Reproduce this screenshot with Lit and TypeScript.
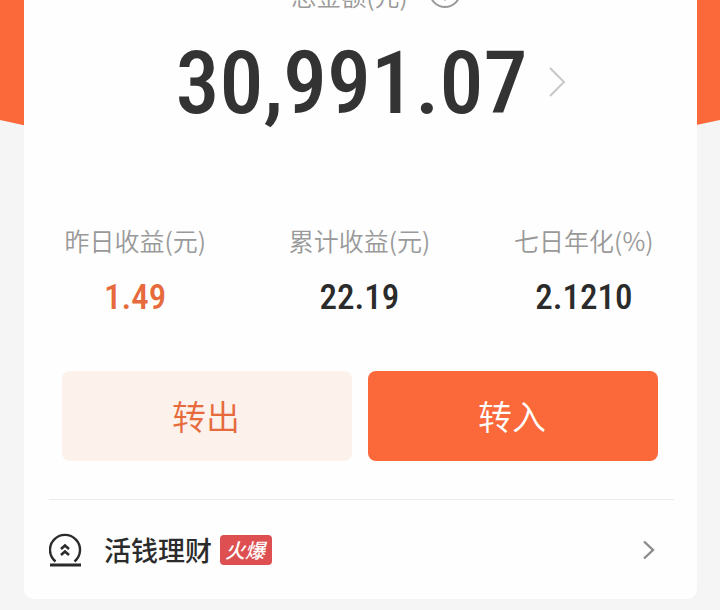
import { LitElement, html, css } from "lit";
import { customElement } from "lit/decorators.js";

interface Stat {
  label: string;
  value: string;
  accent?: boolean;
}

const stats: Stat[] = [
  { label: "昨日收益(元)", value: "1.49", accent: true },
  { label: "累计收益(元)", value: "22.19" },
  { label: "七日年化(%)", value: "2.1210" },
];

@customElement("app-root")
export class AppRoot extends LitElement {
  static styles = css`
    :host {
      display: block;
      min-height: 100vh;
      background: #f5f5f5;
      font-family: "Noto Sans CJK SC", sans-serif;
      color: #333;
    }
    * {
      box-sizing: border-box;
    }
    .page {
      position: relative;
      padding: 0 23px 11px 24px;
      overflow: hidden;
    }
    .banner {
      position: absolute;
      inset: 0 0 auto 0;
      width: 100%;
      height: 160px;
      display: block;
    }
    .card {
      position: relative;
      background: #fefefe;
      border-radius: 0 0 10px 10px;
      padding: 0 23px 0 25px;
    }
    .total-label {
      display: flex;
      justify-content: center;
      gap: 20px;
      height: 11px;
      align-items: flex-end;
      color: #999;
      font-size: 25px;
      line-height: 32px;
      font-weight: 350;
      padding-left: 30px;
    }
    .total-label svg {
      display: block;
      margin-bottom: 2px;
    }
    .total {
      display: flex;
      justify-content: center;
      align-items: center;
      gap: 20px;
      padding-left: 18px;
      color: #333;
      text-decoration: none;
      font: 500 88px/104px "Roboto Condensed", Roboto, sans-serif;
      height: 144px;
    }
    .stats {
      display: grid;
      grid-template-columns: repeat(3, 1fr);
      margin: 0 -22px 0 -26px;
      padding-top: 67px;
    }
    .stat {
      display: flex;
      flex-direction: column;
      align-items: center;
      gap: 16px;
    }
    dt {
      color: #999;
      font-size: 25px;
      line-height: 36px;
      font-weight: 350;
      white-space: nowrap;
    }
    dd {
      margin: 0;
      font: 500 35px/48px "Roboto Condensed", Roboto, sans-serif;
      color: #2b2b2b;
    }
    .accent {
      color: #e66a3c;
    }
    .actions {
      display: grid;
      grid-template-columns: 1fr 1fr;
      gap: 16px;
      padding: 49px 16px 0 13px;
    }
    .btn {
      height: 90px;
      margin: 0;
      padding: 0 2px 0 0;
      border: 0;
      border-radius: 8px;
      font: 350 34px/48px "Noto Sans CJK SC", sans-serif;
    }
    .out {
      background: #fcf1eb;
      color: #e66a3c;
    }
    .in {
      background: #fb693b;
      color: #fff;
    }
    .row {
      display: flex;
      align-items: center;
      margin-top: 38px;
      height: 100px;
      border-top: 1px solid #ececec;
      padding-right: 18px;
      color: #2b2b2b;
      text-decoration: none;
      font-size: 27px;
      line-height: 40px;
      font-weight: 500;
    }
    .name {
      margin-left: 21px;
    }
    .badge {
      margin-left: 8px;
      padding: 0 7px 0 5px;
      border-radius: 4px;
      background: #dd4f50;
      color: #fff;
      font-size: 20px;
      line-height: 30px;
      font-weight: 500;
      font-style: italic;
    }
    .row .arrow {
      margin-left: auto;
    }
    svg {
      flex: none;
    }
  `;

  render() {
    return html`
      <main class="page">
        <svg class="banner" viewBox="0 0 720 160" preserveAspectRatio="none" aria-hidden="true">
          <path d="M0 0H720V120Q360 202 0 120Z" fill="#fb693b" />
        </svg>
        <section class="card">
          <div class="total-label">
            <span>总金额(元)</span>
            <svg width="34" height="34" viewBox="0 0 34 34" fill="none" stroke="#999" stroke-width="2" aria-hidden="true">
              <circle cx="17" cy="17" r="15" />
              <path d="M12 13a5 5 0 1 1 7 4.500q-2 1 -2 3.500M17 23v2.500" />
            </svg>
          </div>
          <a class="total" href="#total">
            <span>30,991.07</span>
            <svg width="18" height="32" viewBox="0 0 18 32" fill="none" stroke="#c8c8c8" stroke-width="2" aria-hidden="true">
              <path d="M2 1L16 15L2 29" />
            </svg>
          </a>
          <dl class="stats">
            ${stats.map(
              (s) => html`<div class="stat">
                <dt>${s.label}</dt>
                <dd class=${s.accent ? "accent" : ""}>${s.value}</dd>
              </div>`
            )}
          </dl>
          <div class="actions">
            <button class="btn out" type="button">转出</button>
            <button class="btn in" type="button">转入</button>
          </div>
          <a class="row" href="#wealth">
            <svg width="34" height="36" viewBox="0 0 34 36" fill="none" stroke="#2b2b2b" aria-hidden="true">
              <path d="M6.500 29.500A15 15 0 1 1 25.500 29.500" stroke-width="2.400" />
              <path d="M1 33H32" stroke-width="3" />
              <path d="M12 17L16 13.500L20 17M12 23L16 19.500L20 23" stroke-width="2.600" />
            </svg>
            <span class="name">活钱理财</span>
            <span class="badge">火爆</span>
            <svg class="arrow" width="14" height="20" viewBox="0 0 14 20" fill="none" stroke="#8c8c8c" stroke-width="2.4" aria-hidden="true">
              <path d="M2 1.500L11 10L2 18.500" />
            </svg>
          </a>
        </section>
      </main>
    `;
  }
}
